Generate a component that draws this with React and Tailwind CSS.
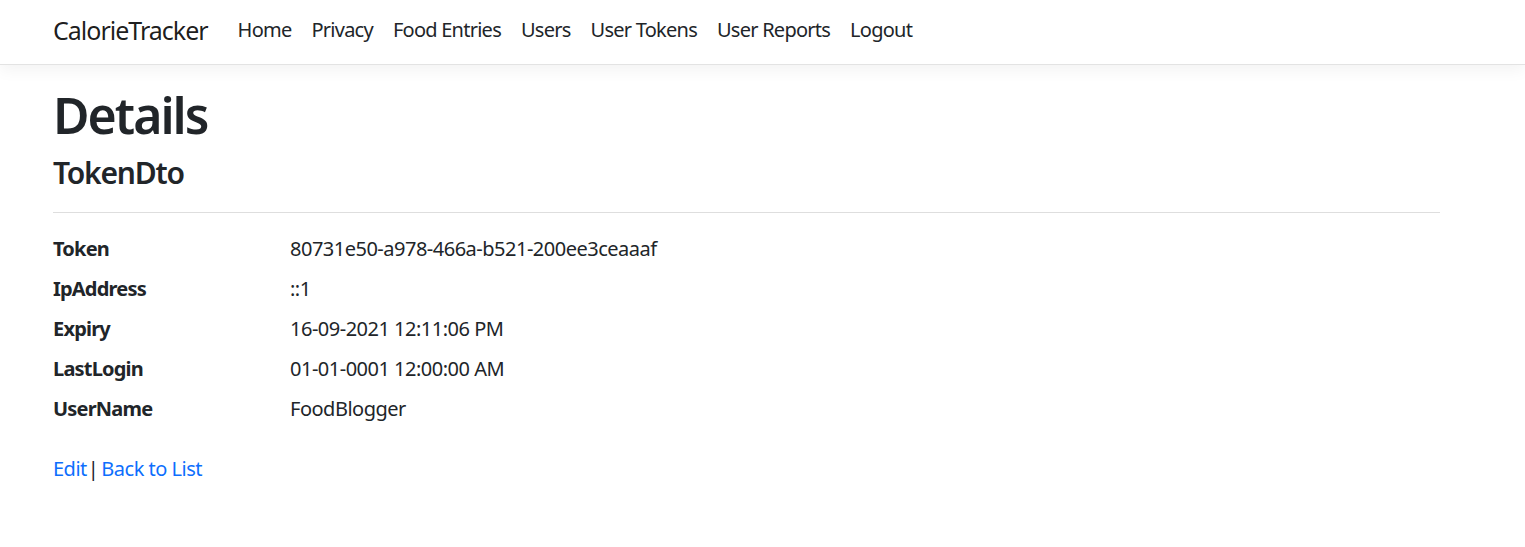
export default function App() {
  const links = ["Home", "Privacy", "Food Entries", "Users", "User Tokens", "User Reports", "Logout"];
  const rows = [
    ["Token", "80731e50-a978-466a-b521-200ee3ceaaaf"],
    ["IpAddress", "::1"],
    ["Expiry", "16-09-2021 12:11:06 PM"],
    ["LastLogin", "01-01-0001 12:00:00 AM"],
    ["UserName", "FoodBlogger"],
  ];
  return (
    <div className="min-h-[547px] bg-white text-[#212529] font-['Segoe_UI','Noto_Sans',sans-serif] text-[20px] leading-[30px] tracking-[-0.5px]">
      <header className="h-[65px] border-b border-[#e3e3e3] bg-white shadow-[0_5px_15px_rgba(0,0,0,0.05)] flex items-center pl-[53px]">
        <span className="text-[25px] leading-[36px] tracking-[-1px] text-[rgba(0,0,0,0.9)] mr-[20px] -mt-[4px]">CalorieTracker</span>
        <nav className="flex items-center -mt-[4px]">
          {links.map((l) => (
            <a key={l} className="px-[10px] tracking-[-0.75px] text-[#212529] cursor-pointer">{l}</a>
          ))}
        </nav>
      </header>
      <main className="pl-[53px] pr-[85px] pt-[20px]">
        <h1 className="text-[50px] leading-[60px] font-semibold tracking-[-2px] mb-[10px]">Details</h1>
        <h4 className="text-[30px] leading-[36px] font-semibold tracking-[-1.2px]">TokenDto</h4>
        <hr className="mt-[21px] mb-[21px] border-0 border-t border-[#dedede]" />
        <dl className="grid grid-cols-[237px_1fr] mb-[20px]">
          {rows.map(([k, v]) => (
            <div key={k} className="contents">
              <dt className="font-bold tracking-[-0.8px] mb-[10px]">{k}</dt>
              <dd className="mb-[10px]">{v}</dd>
            </div>
          ))}
        </dl>
        <div className="flex items-center">
          <a className="text-[#0d6efd] cursor-pointer">Edit</a>
          <span className="ml-[1px] mr-[3px]">|</span>
          <a className="text-[#0d6efd] cursor-pointer">Back to List</a>
        </div>
      </main>
    </div>
  );
}
